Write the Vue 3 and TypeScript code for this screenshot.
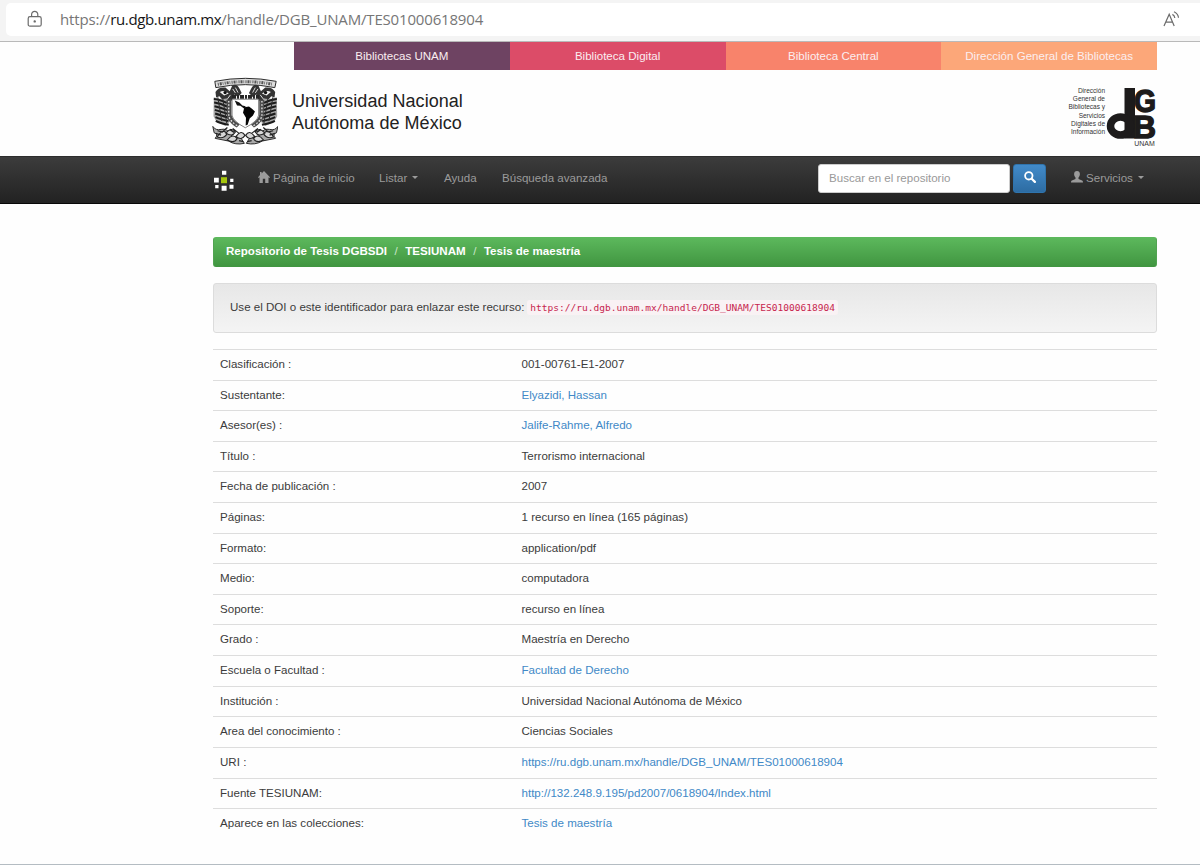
<script setup lang="ts">
interface Row {
  label: string
  value: string
  link?: boolean
}

const tabs = [
  { name: 'Bibliotecas UNAM', tone: 'plum' },
  { name: 'Biblioteca Digital', tone: 'rose' },
  { name: 'Biblioteca Central', tone: 'coral' },
  { name: 'Dirección General de Bibliotecas', tone: 'peach' },
]

const rows: Row[] = [
  { label: 'Clasificación :', value: '001-00761-E1-2007' },
  { label: 'Sustentante:', value: 'Elyazidi, Hassan', link: true },
  { label: 'Asesor(es) :', value: 'Jalife-Rahme, Alfredo', link: true },
  { label: 'Título :', value: 'Terrorismo internacional' },
  { label: 'Fecha de publicación :', value: '2007' },
  { label: 'Páginas:', value: '1 recurso en línea (165 páginas)' },
  { label: 'Formato:', value: 'application/pdf' },
  { label: 'Medio:', value: 'computadora' },
  { label: 'Soporte:', value: 'recurso en línea' },
  { label: 'Grado :', value: 'Maestría en Derecho' },
  { label: 'Escuela o Facultad :', value: 'Facultad de Derecho', link: true },
  { label: 'Institución :', value: 'Universidad Nacional Autónoma de México' },
  { label: 'Area del conocimiento :', value: 'Ciencias Sociales' },
  { label: 'URI :', value: 'https://ru.dgb.unam.mx/handle/DGB_UNAM/TES01000618904', link: true },
  { label: 'Fuente TESIUNAM:', value: 'http://132.248.9.195/pd2007/0618904/Index.html', link: true },
  { label: 'Aparece en las colecciones:', value: 'Tesis de maestría', link: true },
]

const feathers = [0, 1, 2, 3, 4, 5, 6]
</script>

<template>
  <div class="page">
    <div class="browser">
      <div class="address">
        <svg class="lock" viewBox="0 0 16 18" width="16" height="18">
          <rect x="1.2" y="6.6" width="13" height="9.6" rx="1.8" />
          <path d="M4.6 6.4V4.4a3.1 3.1 0 0 1 6.2 0v2" />
          <circle cx="7.7" cy="11.4" r=".6" />
        </svg>
        <div class="url">
          <span class="scheme">https://</span><span class="host">ru.dgb.unam.mx</span><span class="path">/handle/DGB_UNAM/TES01000618904</span>
        </div>
        <svg class="read" viewBox="0 0 18 18" width="18" height="18">
          <path d="M1 16 6.2 4.2 11.2 16M2.8 12.1h6.8" />
          <path d="M9.4 4.4c1.500.8 2.300 2 2.400 3.600M11 1.800c2.700 1.300 4.300 3.400 4.500 6" />
        </svg>
      </div>
    </div>

    <div class="tabs">
      <div v-for="tab in tabs" :key="tab.name" class="tab" :class="tab.tone">{{ tab.name }}</div>
    </div>

    <header class="masthead">
      <svg class="crest" viewBox="38 22 198 208" width="66" height="69">
        <g fill="none" stroke="#2b2b2b" stroke-width="3">
          <path d="M46 35Q138 17 231 35L227 54Q138 36 49 54Z" fill="#ddd" />
          <path d="M55 44Q138 28 222 44" stroke-width="9" stroke-dasharray="3 3 6 3 2 4" stroke="#555" />
        </g>
        <g v-for="side in [1, -1]" :key="side" :transform="side === 1 ? '' : 'translate(276 0) scale(-1 1)'">
          <path d="M48 67Q58 51 78 54L91 65 99 47Q113 40 121 58L127 70 116 82 105 75 97 93Q83 101 68 90L60 80 50 84Z" fill="#343434" />
          <path d="M61 67Q75 59 88 72L74 78Z" fill="#f5f5f5" />
          <circle cx="77" cy="69" r="5" fill="#111" />
          <path d="M100 58l8 12M108 54l8 15M84 88l9-12" stroke="#ddd" stroke-width="3" />
          <path d="M43 83Q66 92 84 86L94 154 78 170 51 157 42 140Z" fill="#a6a6a6" />
          <path
            v-for="f in feathers"
            :key="f"
            :d="`M${43 + f} ${88 + f * 11}Q61 ${89 + f * 12} ${82 + f} ${100 + f * 11}`"
            fill="none"
            stroke="#1b1b1b"
            stroke-width="6"
          />
          <path d="M55 83L67 155M70 87L82 161" stroke="#292929" stroke-width="3" />
          <path d="M81 91L83 146Q96 165 112 174L121 165Q98 151 96 136V89Z" fill="#4c4c4c" />
          <path d="M88 94V139Q92 156 114 169" fill="none" stroke="#e6e6e6" stroke-width="4" stroke-dasharray="5 5" />
          <path d="M40 171Q48 184 65 180T93 194T123 203L135 222Q108 228 87 215L47 207Q58 194 44 190Z" fill="#aaa" stroke="#292929" stroke-width="3" />
          <path d="M53 203q18-28 30-10-10 17-30 10ZM79 191q18-20 29-3-9 16-29 3ZM83 212q18-22 30-4-9 15-30 4ZM110 201q16-22 27-3-11 17-27 3ZM54 184l17 4M100 177l19 15" fill="#d8d8d8" stroke="#222" stroke-width="3.5" />
          <path d="M49 192l16 5M72 184l12-10M91 180l13 9M119 214l13 3" stroke="#222" stroke-width="4" />
        </g>
        <path d="M98 89H178V137Q176 155 138 175Q100 155 98 137Z" fill="#fff" stroke="#444" stroke-width="2" />
        <path d="M98 82H180" stroke="#252525" stroke-width="11" stroke-dasharray="12 3 6 3" />
        <path d="M106 93L120 99 129 108 139 110 135 118 123 109 113 108Z" fill="#111" />
        <path d="M135 113L149 111 158 118 167 126 161 138 151 147 145 166 139 168 140 145 131 130Z" fill="#050505" />
      </svg>
      <div class="school">Universidad Nacional<br />Autónoma de México</div>
      <div class="office">
        <div class="office-name">Dirección<br />General de<br />Bibliotecas y<br />Servicios<br />Digitales de<br />Información</div>
        <svg class="monogram" viewBox="0 0 52 62" width="52" height="62">
          <rect x="19.5" y="2" width="10.5" height="50.5" fill="#1d1b1b" />
          <ellipse cx="15.5" cy="40" rx="10" ry="9" fill="none" stroke="#1d1b1b" stroke-width="7.5" />
          <text x="29" y="26" class="letter" textLength="22" lengthAdjust="spacingAndGlyphs">G</text>
          <text x="28" y="51.5" class="letter b" textLength="23" lengthAdjust="spacingAndGlyphs">B</text>
          <text x="29.2" y="60" class="caption" textLength="20.5" lengthAdjust="spacingAndGlyphs">UNAM</text>
        </svg>
      </div>
    </header>

    <nav class="navbar">
      <svg class="brand" viewBox="0 0 20 21" width="20" height="21">
        <path fill="#fff" d="M8 .7h4.300v4H8zM0 7.700h4.800v4.800H0zM16.200 8.700h3.200v3.200h-3.200zM1.200 15h3.300v3.300H1.200zM7.600 15.700h5v5h-5zM15.500 14.800h4v4h-4z" />
        <path fill="#a6c60d" d="M7 7.200h6v6H7z" />
      </svg>
      <a class="item home">
        <svg viewBox="0 0 12 12" width="12" height="12"><path d="M6 0 12 6.200l-.7.700-.8-.7v5.800H7.200V7.700H4.800V12H1.500V6.200l-.8.700L0 6.200 2 4.100V.9h1.600v1.600z" /></svg>
        <span>Página de inicio</span>
      </a>
      <a class="item list"><span>Listar</span><i class="caret"></i></a>
      <a class="item help"><span>Ayuda</span></a>
      <a class="item advanced"><span>Búsqueda avanzada</span></a>
      <input class="search" type="text" placeholder="Buscar en el repositorio" />
      <button class="go" aria-label="Buscar">
        <svg viewBox="0 0 12 12" width="12" height="12">
          <circle cx="4.8" cy="4.8" r="3.7" fill="none" stroke="#fff" stroke-width="1.8" />
          <path d="m7.700 7.700 3.200 3.200" stroke="#fff" stroke-width="2.200" stroke-linecap="round" />
        </svg>
      </button>
      <a class="item services">
        <svg viewBox="0 0 12 12" width="12" height="12"><path d="M6 0c1.800 0 2.900 1.200 2.900 3.100 0 1.600-.6 2.700-1.400 3.500v1.300l3.600 1.600c.6.300.9.800.9 2H0c0-1.200.3-1.700.9-2l3.600-1.600V6.600C3.700 5.800 3.100 4.700 3.100 3.100 3.100 1.200 4.200 0 6 0z" /></svg>
        <span>Servicios</span><i class="caret"></i>
      </a>
    </nav>

    <main class="content">
      <div class="crumbs">
        <b>Repositorio de Tesis DGBSDI</b><span class="sep">/</span><b>TESIUNAM</b><span class="sep">/</span><b>Tesis de maestría</b>
      </div>
      <div class="well">
        <span class="hint">Use el DOI o este identificador para enlazar este recurso:</span>
        <code>https://ru.dgb.unam.mx/handle/DGB_UNAM/TES01000618904</code>
      </div>
      <div class="record">
        <div v-for="row in rows" :key="row.label" class="row">
          <div class="label">{{ row.label }}</div>
          <div class="value" :class="{ link: row.link }">{{ row.value }}</div>
        </div>
      </div>
    </main>
  </div>
</template>

<style>
body {
  margin: 0;
  background: #fefefe;
}
</style>

<style scoped>
.page {
  box-sizing: border-box;
  width: 1200px;
  height: 865px;
  overflow: hidden;
  background: #fefefe;
  border-bottom: 1px solid #b4bcc2;
  font-family: "Liberation Sans", Arial, sans-serif;
  font-size: 11.57px;
  color: #3b3b3b;
}
.page * {
  box-sizing: border-box;
}
.browser {
  height: 42px;
  padding: 3px 0 0 6px;
  background: #f4f4f4;
  border-bottom: 1px solid #b9b9b9;
}
.address {
  display: flex;
  align-items: center;
  height: 33px;
  padding: 0 19px 0 21px;
  background: #fff;
  border-radius: 5px 0 0 5px;
}
.lock,
.read {
  flex: none;
  fill: none;
  stroke: #6b6b6b;
  stroke-width: 1.2;
}
.lock {
  margin-top: -1px;
}
.read {
  margin-top: -2px;
}
.lock circle {
  fill: #555;
}
.url {
  flex: 1;
  margin: -1px 0 0 17px;
  font: 15px/20px "Open Sans", "Noto Sans", sans-serif;
  color: #767676;
  white-space: nowrap;
}
.scheme {
  letter-spacing: -0.12px;
}
.host {
  color: #161616;
  letter-spacing: -0.35px;
}
.path {
  letter-spacing: -0.17px;
}
.tabs {
  display: grid;
  grid-template-columns: repeat(4, 1fr);
  width: 863px;
  height: 28px;
  margin-left: 294px;
}
.tab {
  color: #fbeef0;
  line-height: 28px;
  text-align: center;
}
.plum { background: #6e4362; }
.rose { background: #dc4c68; }
.coral { background: #f8836b; }
.peach { background: #fca779; }
.masthead {
  display: flex;
  height: 86px;
  padding: 7px 43px 0 212px;
}
.crest {
  flex: none;
}
.school {
  margin: 14px 0 0 14px;
  font-size: 18px;
  line-height: 21.5px;
  letter-spacing: 0.04px;
  color: #222;
  white-space: nowrap;
}
.office {
  display: flex;
  margin-left: auto;
  padding-top: 9px;
}
.office-name {
  padding-top: 1px;
  font-size: 6.5px;
  line-height: 8.2px;
  text-align: right;
  color: #333;
  white-space: nowrap;
}
.monogram {
  overflow: visible;
}
.letter {
  font: bold 32px "Liberation Sans", Arial, sans-serif;
  fill: #1d1b1b;
  stroke: #1d1b1b;
  stroke-width: 1.4px;
}
.caption {
  font: 6.5px "Liberation Sans", Arial, sans-serif;
  fill: #333;
}
.navbar {
  display: flex;
  align-items: flex-start;
  height: 48px;
  padding-left: 214px;
  background: linear-gradient(#3c3c3c, #222);
  border-top: 1px solid #2d2d2d;
  border-bottom: 1px solid #080808;
}
.brand {
  flex: none;
  margin-top: 13px;
}
.item {
  display: flex;
  align-items: center;
  height: 41px;
  color: #9b9b9b;
  white-space: nowrap;
}
.item svg {
  fill: #9b9b9b;
  margin: -2px 3px 0 0;
}
.caret {
  margin-left: 5px;
  border: 3.5px solid transparent;
  border-top-color: #9b9b9b;
  border-bottom: 0;
}
.home { width: 121px; margin-left: 24px; }
.list { width: 65px; }
.help { width: 58px; }
.advanced { width: 316px; }
.search {
  width: 192px;
  height: 29px;
  margin-top: 7px;
  padding: 0 10px 2px;
  border: 1px solid #ccc;
  border-radius: 3px;
  font: inherit;
  background: #fff;
}
.search::placeholder {
  color: #999;
}
.go {
  display: grid;
  place-items: center;
  width: 33px;
  height: 29px;
  margin: 7px 0 0 3px;
  padding: 0 0 3px;
  border: 1px solid #2f74ad;
  border-radius: 3px;
  background: linear-gradient(#428bca, #2d6ca2);
}
.services { margin-left: 25px; }
.content {
  width: 944px;
  margin: 33px 0 0 213px;
}
.crumbs {
  height: 30px;
  padding-left: 12px;
  border: 1px solid #51a351;
  border-color: #5cb85c #51a351 #419641;
  border-radius: 3px;
  background: linear-gradient(#5cb85c, #419641);
  line-height: 27px;
  color: #fff;
  white-space: nowrap;
}
.sep {
  margin: 0 7.5px;
  color: #c9e6c9;
}
.well {
  height: 50px;
  margin-top: 16px;
  padding-left: 16px;
  border: 1px solid #dcdcdc;
  border-radius: 3px;
  background: linear-gradient(#e7e7e7, #f4f4f4);
  line-height: 47px;
  white-space: nowrap;
}
code {
  margin-left: 3px;
  padding: 2px 3px;
  border-radius: 3px;
  background: #f9f2f4;
  color: #c7254e;
  font: 9.55px "DejaVu Sans Mono", monospace;
}
.record {
  margin-top: 16px;
}
.row {
  display: flex;
  height: 30.62px;
  padding-left: 7px;
  border-top: 1px solid #ddd;
  line-height: 29.7px;
  white-space: nowrap;
}
.label {
  width: 301.5px;
}
.link {
  color: #4189c7;
}
</style>
